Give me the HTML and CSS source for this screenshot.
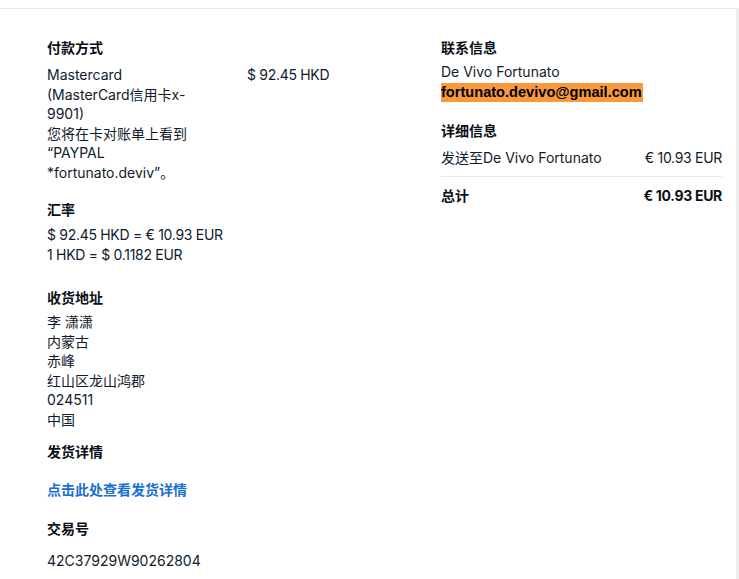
FILE: index.html
```html
<!DOCTYPE html>
<html lang="zh">
<head>
<meta charset="utf-8">
<link rel="stylesheet" href="styles.css">
</head>
<body>
<div class="page">
  <div class="card">
    <div class="col left">
      <section class="sec pay">
        <h3 class="h">付款方式</h3>
        <div class="pay-row">
          <div class="pay-desc">Mastercard (MasterCard信用卡x-9901)<br>您将在卡对账单上看到 “PAYPAL *fortunato.deviv”。</div>
          <div class="pay-amt num">$ 92.45 HKD</div>
        </div>
      </section>
      <section class="sec rate">
        <h3 class="h">汇率</h3>
        <div class="body num">$ 92.45 HKD = € 10.93 EUR<br>1 HKD = $ 0.1182 EUR</div>
      </section>
      <section class="sec addr">
        <h3 class="h">收货地址</h3>
        <div class="body addr-body">李 潇潇<br>内蒙古<br>赤峰<br>红山区龙山鸿郡<br>024511<br>中国</div>
      </section>
      <section class="sec ship">
        <h3 class="h">发货详情</h3>
        <a class="link" href="#">点击此处查看发货详情</a>
      </section>
      <section class="sec txn">
        <h3 class="h">交易号</h3>
        <div class="body">42C37929W90262804</div>
      </section>
    </div>
    <div class="col right">
      <section class="sec contact">
        <h3 class="h">联系信息</h3>
        <div class="body">De Vivo Fortunato<br><span class="email">fortunato.devivo@gmail.com</span></div>
      </section>
      <section class="sec details">
        <h3 class="h">详细信息</h3>
        <div class="row item"><span>发送至De Vivo Fortunato</span><span class="num">€ 10.93 EUR</span></div>
        <div class="row total"><span>总计</span><span class="num">€ 10.93 EUR</span></div>
      </section>
    </div>
  </div>
</div>
</body>
</html>
```

FILE: styles.css
```css
* { box-sizing: border-box; }
html, body { margin: 0; padding: 0; background: #fff; }
body {
  font-family: Inter, "Noto Sans CJK SC", sans-serif;
  font-size: 14px;
  color: #101b2c;
  height: 579px;
  overflow: hidden;
}
.page { padding-top: 8px; height: 100%; }
.card {
  width: 739px;
  height: 100%;
  border-top: 1px solid #e8e9ea;
  border-right: 3px solid #efefef;
  padding: 29px 14px 0 47px;
  display: flex;
}
.col.left { width: 394px; flex: none; }
.col.right { flex: 1; }
.h {
  margin: 0;
  font-size: 14px;
  font-weight: 700;
  line-height: 20px;
  color: #0a0f18;
}
.num { letter-spacing: -0.3px; }
.body { line-height: 19.5px; }
.pay-row { display: grid; grid-template-columns: 150px auto; column-gap: 50px; margin-top: 7px; line-height: 19.5px; }
.rate { margin-top: 18px; }
.rate .body { margin-top: 5px; }
.addr { margin-top: 24px; }
.addr-body { margin-top: 4px; line-height: 19.6px; }
.ship { margin-top: 12px; }
.link {
  display: block;
  margin-top: 18px;
  color: #1a6fd3;
  font-weight: 700;
  text-decoration: none;
  line-height: 20px;
}
.txn { margin-top: 19px; }
.txn .body { margin-top: 12px; }
.contact .body { margin-top: 4px; }
.email {
  display: inline-block;
  background: #f8993d;
  color: #000;
  font-family: "Liberation Sans", Arial, sans-serif;
  font-weight: 700;
  font-size: 14.6px;
  line-height: 19px;
  padding-right: 1px;
}
.details { margin-top: 19px; }
.row { display: flex; justify-content: space-between; }
.item { margin-top: 7px; line-height: 19.5px; padding-bottom: 9px; border-bottom: 1px solid #e8e9ea; }
.total { margin-top: 9px; font-weight: 700; line-height: 20px; color: #0a0f18; }
```
